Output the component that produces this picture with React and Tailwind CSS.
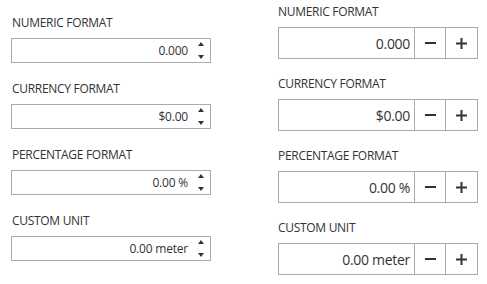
import React from "react";

const FIELDS = [
  { label: "NUMERIC FORMAT", value: "0.000" },
  { label: "CURRENCY FORMAT", value: "$0.00" },
  { label: "PERCENTAGE FORMAT", value: "0.00 %" },
  { label: "CUSTOM UNIT", value: "0.00 meter" },
];

const font = { fontFamily: '"Segoe UI", "Open Sans", "Noto Sans", sans-serif' };

function SpinArrows() {
  return (
    <div className="flex h-full w-[22px] flex-col justify-between py-[3px] pl-[10px] pr-[6px]">
      <svg width="6" height="4" viewBox="0 0 6 4">
        <path d="M3 0 L6 4 L0 4 Z" fill="#333" />
      </svg>
      <svg width="6" height="4" viewBox="0 0 6 4">
        <path d="M0 0 L6 0 L3 4 Z" fill="#333" />
      </svg>
    </div>
  );
}

function SpinField({ label, value }) {
  return (
    <div className="mb-[18px]">
      <div className="pl-px text-[12px] leading-[16px] tracking-[-0.3px] text-[#333]">{label}</div>
      <div className="mt-[7px] flex h-[25px] w-[200px] items-center border border-[#ababab] bg-white">
        <span className="flex-1 text-right text-[12px] tracking-[-0.2px] text-[#333]">{value}</span>
        <SpinArrows />
      </div>
    </div>
  );
}

function ButtonField({ label, value }) {
  return (
    <div className="mb-[17px]">
      <div className="text-[12px] leading-[16px] tracking-[-0.3px] text-[#333]">{label}</div>
      <div className="mt-[7px] flex h-[32px] w-[200px] border border-[#ababab] bg-white">
        <span className="flex flex-1 items-center justify-end pr-[4px] text-[14px] tracking-[-0.3px] text-[#333]">
          {value}
        </span>
        <button className="flex w-[31px] items-center justify-center border-l border-[#ababab]">
          <svg width="11" height="2" viewBox="0 0 11 2">
            <rect width="11" height="2" fill="#333" />
          </svg>
        </button>
        <button className="flex w-[32px] items-center justify-center border-l border-[#ababab]">
          <svg width="11" height="11" viewBox="0 0 11 11">
            <rect x="0" y="4.5" width="11" height="2" fill="#333" />
            <rect x="4.5" y="0" width="2" height="11" fill="#333" />
          </svg>
        </button>
      </div>
    </div>
  );
}

export default function App() {
  return (
    <div className="flex h-[284px] w-[487px] bg-white" style={font}>
      <div className="ml-[11px] pt-[15px]">
        {FIELDS.map((f) => (
          <SpinField key={f.label} {...f} />
        ))}
      </div>
      <div className="ml-[67px] pt-[4px]">
        {FIELDS.map((f) => (
          <ButtonField key={f.label} {...f} />
        ))}
      </div>
    </div>
  );
}
